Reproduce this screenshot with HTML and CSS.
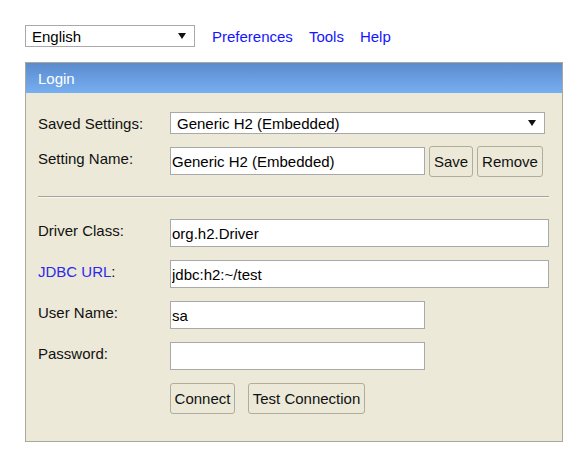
FILE: index.html
```html
<!DOCTYPE html>
<html lang="en">
<head>
<meta charset="utf-8">
<title>H2 Console</title>
<link rel="stylesheet" href="styles.css">
</head>
<body>
<div class="topbar">
  <div class="sel sel-lang"><span class="sel-text">English</span><span class="arrow"></span></div>
  <a class="link" href="#">Preferences</a>
  <a class="link" href="#">Tools</a>
  <a class="link" href="#">Help</a>
</div>
<div class="panel">
  <div class="panel-head">Login</div>
  <div class="panel-body">
    <div class="row row-saved">
      <label class="lbl">Saved Settings:</label>
      <div class="sel sel-saved"><span class="sel-text">Generic H2 (Embedded)</span><span class="arrow"></span></div>
    </div>
    <div class="row row-name">
      <label class="lbl lbl-name">Setting Name:</label>
      <input class="inp inp-short inp-name" type="text" value="Generic H2 (Embedded)">
      <button class="btn btn-save">Save</button>
      <button class="btn btn-remove">Remove</button>
    </div>
    <hr class="sep">
    <div class="row row-driver">
      <label class="lbl">Driver Class:</label>
      <input class="inp inp-long" type="text" value="org.h2.Driver">
    </div>
    <div class="row">
      <label class="lbl"><span class="lbl-link">JDBC URL</span>:</label>
      <input class="inp inp-long" type="text" value="jdbc:h2:~/test">
    </div>
    <div class="row">
      <label class="lbl">User Name:</label>
      <input class="inp inp-short" type="text" value="sa">
    </div>
    <div class="row">
      <label class="lbl">Password:</label>
      <input class="inp inp-short" type="password" value="">
    </div>
    <div class="row row-actions">
      <span class="lbl"></span>
      <button class="btn btn-connect">Connect</button>
      <button class="btn btn-test">Test Connection</button>
    </div>
  </div>
</div>
</body>
</html>
```
FILE: styles.css
```css
* { box-sizing: border-box; }
html, body { margin: 0; padding: 0; background: #fff; }
body {
  padding: 25px 0 0 25px;
  font-family: "Liberation Sans", Arial, sans-serif;
  font-size: 15px;
  line-height: 17px;
  color: #111;
}
.topbar {
  display: flex;
  align-items: center;
  height: 22px;
}
.link {
  color: #1414ff;
  text-decoration: none;
  margin-left: 16px;
}
.topbar .sel + .link { margin-left: 17px; }

.sel {
  display: flex;
  align-items: center;
  justify-content: space-between;
  height: 22px;
  background: #fff;
  border: 1px solid #a9a9a9;
  padding: 0 8px 0 6px;
  color: #000;
}
.sel-lang { width: 170px; }
.sel-saved { width: 375px; }
.arrow {
  width: 0;
  height: 0;
  border-left: 4px solid transparent;
  border-right: 4px solid transparent;
  border-top: 6px solid #111;
}

.panel {
  width: 538px;
  margin-top: 15px;
  border: 1px solid #aca899;
  background: #ece9d8;
}
.panel-head {
  height: 30px;
  padding: 7px 12px 0;
  color: #fff;
  background: linear-gradient(to bottom, #5a8bcd, #77aff1);
}
.panel-body {
  padding: 19px 13px 27px 12px;
}
.row {
  display: flex;
  align-items: flex-start;
  margin-top: 13px;
}
.row-saved { margin-top: 0; }
.row-name { margin-top: 12px; }
.row-driver { margin-top: 21px; }
.lbl {
  flex: 0 0 132px;
  padding-top: 3px;
}
.lbl-name { padding-top: 4px; }
.lbl-link { color: #2a2aee; }

.inp {
  height: 28px;
  border: 1px solid #a9a9a9;
  background: #fff;
  padding: 0 1px;
  margin: 0;
  font: inherit;
  color: #000;
  outline: none;
}
.inp-short { width: 255px; }
.inp-long { width: 380px; }
.inp-name { margin-top: 1px; }

.sep {
  width: 511px;
  margin: 19px 0 0;
  height: 2px;
  border: 0;
  border-top: 1px solid #a5a49c;
  border-bottom: 1px solid #f7f6f0;
}

.btn {
  height: 31px;
  margin: 0;
  padding: 0 3px;
  font: inherit;
  color: #111;
  background: #ece9d8;
  border: 1px solid #b1ad9d;
  border-radius: 3px;
}
.btn-save { margin-left: 4px; width: 44px; }
.btn-remove { margin-left: 4px; width: 66px; }
.btn-connect { width: 65px; }
.btn-test { margin-left: 13px; width: 117px; }
```
